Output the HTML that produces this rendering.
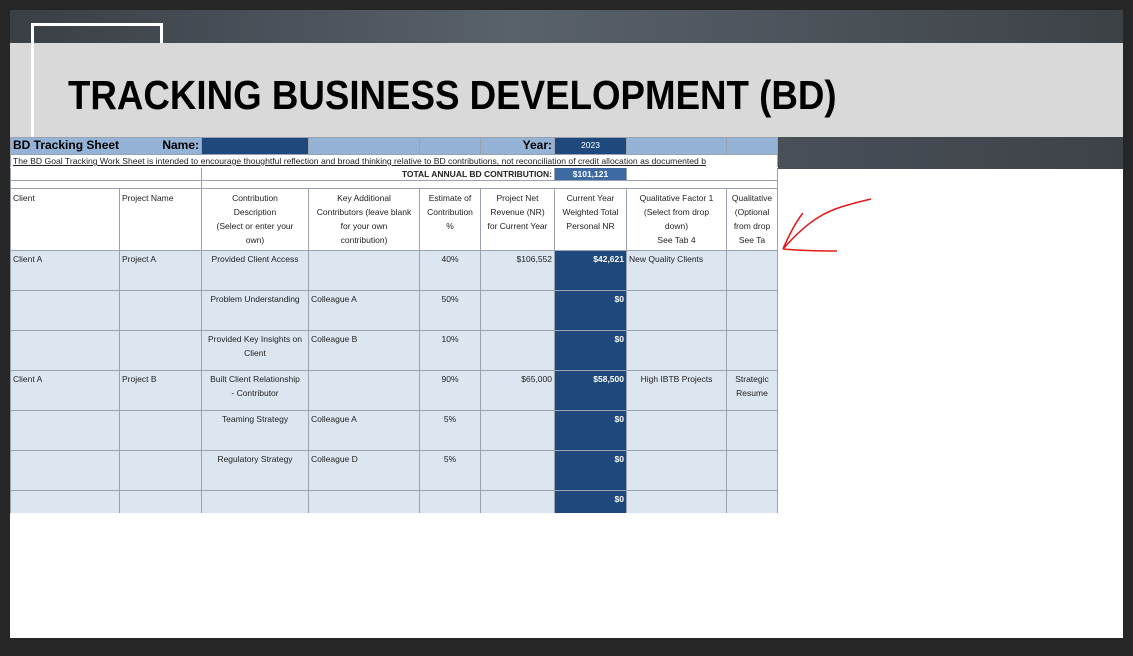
<!DOCTYPE html>
<html><head><meta charset="utf-8"><style>
body{margin:0;width:1133px;height:656px;background:#262626;position:relative;overflow:hidden;font-family:"Liberation Sans",sans-serif}
#slide{position:absolute;left:10px;top:10px;width:1113px;height:628px;background:#fff;overflow:hidden}
#topband{position:absolute;left:0;top:0;width:1113px;height:33px;background:linear-gradient(90deg,#3a3f45 0%,#596169 45%,#4d545b 70%,#3c4146 100%)}
#gray{position:absolute;left:0;top:33px;width:1113px;height:94px;background:#d9d9d9}
#darkr{position:absolute;left:767px;top:127px;width:346px;height:32px;background:linear-gradient(90deg,#4a5058,#3d4248)}
.fr{position:absolute;background:#fff}
#title{position:absolute;left:58px;top:62px;font-size:41px;font-weight:bold;color:#000;white-space:nowrap;transform:scaleX(0.895);transform-origin:0 0}
#tw{position:absolute;left:0;top:127px;width:768px;height:376px;overflow:hidden}
table{border-collapse:collapse;table-layout:fixed;width:767px;font-size:8.5px;color:#222}
td{padding:0 2px;overflow:hidden;white-space:nowrap;border:1px solid #9aa3ad;vertical-align:top;line-height:14px}
.lb{background:#95b3d7;color:#000}
.db{background:#1f497d;color:#fff}
.d{height:40px}
.d td{background:#dce6f1;height:38px;padding-top:1px}
.d td.v{background:#1f497d;color:#fff;font-weight:bold;text-align:right}
.c{text-align:center}.r{text-align:right}
.h td{background:#fff;text-align:center;white-space:nowrap;line-height:14px;padding-top:2px}
.h td:first-child,.h td:nth-child(2){text-align:left}
</style></head><body>
<div id="slide">
<div id="topband"></div><div id="gray"></div><div id="darkr"></div>
<div class="fr" style="left:21px;top:13px;width:132px;height:3px"></div>
<div class="fr" style="left:21px;top:13px;width:3px;height:114px"></div>
<div class="fr" style="left:150px;top:13px;width:3px;height:20px"></div>
<div id="title">TRACKING BUSINESS DEVELOPMENT (BD)</div>
<div id="tw">
<table>
<colgroup><col style="width:109px"><col style="width:82px"><col style="width:107px"><col style="width:111px"><col style="width:61px"><col style="width:74px"><col style="width:72px"><col style="width:100px"><col style="width:51px"></colgroup>
<tr style="height:17px"><td class="lb" colspan="2" style="font-size:12px;font-weight:bold;line-height:15px">BD Tracking Sheet<span style="float:right">Name:</span></td><td class="db"></td><td class="lb"></td><td class="lb"></td><td class="lb r" style="font-size:12px;font-weight:bold;line-height:15px">Year:</td><td class="db c" style="line-height:15px">2023</td><td class="lb"></td><td class="lb"></td></tr>
<tr style="height:13px"><td colspan="9" style="text-decoration:underline;line-height:12px;font-size:8.6px;border-color:#fff #9aa3ad">The BD Goal Tracking Work Sheet is intended to encourage thoughtful reflection and broad thinking relative to BD contributions, not reconciliation of credit allocation as documented b</td></tr>
<tr style="height:13px"><td colspan="2"></td><td colspan="4" class="r" style="font-weight:bold;line-height:12px">TOTAL ANNUAL BD CONTRIBUTION:</td><td class="c" style="background:#3d6aa3;color:#fff;font-weight:bold;line-height:12px">$101,121</td><td colspan="2"></td></tr>
<tr style="height:8px"><td colspan="2"></td><td colspan="7"></td></tr>
<tr class="h" style="height:62px"><td>Client</td><td>Project Name</td><td>Contribution<br>Description<br>(Select or enter your<br>own)</td><td>Key Additional<br>Contributors (leave blank<br>for your own<br>contribution)</td><td>Estimate of<br>Contribution<br>%</td><td>Project Net<br>Revenue (NR)<br>for Current Year</td><td>Current Year<br>Weighted Total<br>Personal NR</td><td>Qualitative Factor 1<br>(Select from drop<br>down)<br>See Tab 4</td><td>Qualitative<br>(Optional<br>from drop<br>See Ta</td></tr>
<tr class="d"><td>Client A</td><td>Project A</td><td class="c">Provided Client Access</td><td></td><td class="c">40%</td><td class="r">$106,552</td><td class="v">$42,621</td><td>New Quality Clients</td><td></td></tr>
<tr class="d"><td></td><td></td><td class="c">Problem Understanding</td><td>Colleague A</td><td class="c">50%</td><td></td><td class="v">$0</td><td></td><td></td></tr>
<tr class="d"><td></td><td></td><td class="c">Provided Key Insights on<br>Client</td><td>Colleague B</td><td class="c">10%</td><td></td><td class="v">$0</td><td></td><td></td></tr>
<tr class="d"><td>Client A</td><td>Project B</td><td class="c">Built Client Relationship<br>- Contributor</td><td></td><td class="c">90%</td><td class="r">$65,000</td><td class="v">$58,500</td><td class="c">High IBTB Projects</td><td class="c">Strategic<br>Resume</td></tr>
<tr class="d"><td></td><td></td><td class="c">Teaming Strategy</td><td>Colleague A</td><td class="c">5%</td><td></td><td class="v">$0</td><td></td><td></td></tr>
<tr class="d"><td></td><td></td><td class="c">Regulatory Strategy</td><td>Colleague D</td><td class="c">5%</td><td></td><td class="v">$0</td><td></td><td></td></tr>
<tr class="d"><td></td><td></td><td></td><td></td><td></td><td></td><td class="v">$0</td><td></td><td></td></tr>
</table>
</div>
<svg style="position:absolute;left:765px;top:185px" width="100" height="70"><path d="M96 4 C80 8 60 12 44 22 C34 28 22 38 8 54 M8 54 C30 56 48 56 62 56 M8 54 C14 40 20 28 28 18" stroke="#e31b1b" stroke-width="1.6" fill="none"/></svg>
</div>
</body></html>
